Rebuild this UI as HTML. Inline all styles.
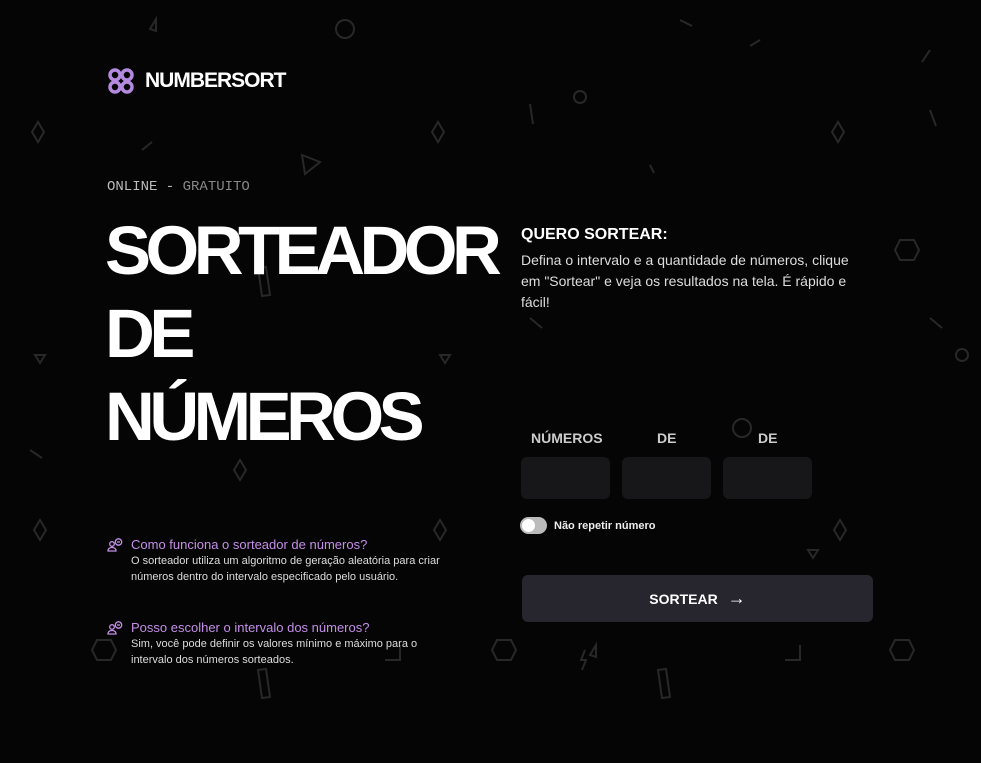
<!DOCTYPE html>
<html><head><meta charset="utf-8"><style>
*{margin:0;padding:0;box-sizing:border-box}
body{width:981px;height:763px;background:#050505;font-family:"Liberation Sans",sans-serif;color:#fff;position:relative;overflow:hidden}
.a{position:absolute}
.bg{position:absolute;left:0;top:0}
.logo{left:107px;top:67px;display:flex;align-items:center;gap:10px;font-weight:bold;font-size:21px;letter-spacing:-1px}
.tag{left:107px;top:179px;font-family:"Liberation Mono",monospace;font-size:14px;color:#bbb}
.tag span{color:#888}
h1{position:absolute;left:105px;top:209px;font-size:69px;line-height:83px;font-weight:900;letter-spacing:-5.5px}
.q{left:107px;width:350px}
.q .t{color:#c48ee8;font-size:13px;position:relative;padding-left:24px}
.q .t svg{position:absolute;left:0;top:1px}
.q .d{color:#ddd;font-size:11px;line-height:16px;padding-left:24px;margin-top:1px}
.rt{left:521px;top:226px;font-weight:bold;font-size:16px}
.rd{left:521px;top:250px;width:345px;font-size:14px;line-height:21px;color:#ddd}
.lbl{top:430px;font-weight:bold;font-size:14px;color:#ccc}
.in{top:457px;width:89px;height:42px;background:#17171a;border-radius:6px}
.btn{left:522px;top:575px;width:351px;height:47px;background:#27262f;border-radius:6px;display:flex;align-items:center;justify-content:center;gap:10px;font-weight:bold;font-size:14px}
</style></head><body>
<svg class="bg" width="981" height="763" fill="none" stroke="#282828" stroke-width="2">
<circle cx="345" cy="29" r="9"/><circle cx="742" cy="428" r="9"/><circle cx="962" cy="355" r="6"/><circle cx="580" cy="97" r="6"/>
<path d="M150 29l6-10v12z M590 655l6-10v12z M142 150l10-8 M302 155l18 7-15 12z M530 104l3 20 M35 355l10 0-5 8z M440 355l10 0-5 8z M808 550l10 0-5 8z M900 240h14l5 10-5 10h-14l-5-10z M97 640h14l5 10-5 10h-14l-5-10z M497 640h14l5 10-5 10h-14l-5-10z M895 640h14l5 10-5 10h-14l-5-10z M38 122l6 10-6 10-6-10z M438 122l6 10-6 10-6-10z M838 122l6 10-6 10-6-10z M240 460l6 10-6 10-6-10z M640 460l6 10-6 10-6-10z M40 520l6 10-6 10-6-10z M440 520l6 10-6 10-6-10z M840 520l6 10-6 10-6-10z M258 268l4 28 8-1-4-28z M258 670l4 28 8-1-4-28z M658 670l4 28 8-1-4-28z M930 318l12 10 M530 318l12 10 M30 450l12 8 M930 50l-8 12 M930 110l6 16 M680 20l12 6 M760 40l-10 6 M800 645v15h-15 M400 645v15h-15 M585 650l-4 10h5l-4 10 M650 165l4 8"/>
</svg>
<div class="a logo"><svg width="28" height="28" viewBox="0 0 28 28" fill="none" stroke="#b48ae0" stroke-width="3.5"><circle cx="8" cy="8" r="5"/><circle cx="20" cy="8" r="5"/><circle cx="8" cy="20" r="5"/><circle cx="20" cy="20" r="5"/></svg>NUMBERSORT</div>
<div class="a tag">ONLINE - <span>GRATUITO</span></div>
<h1>SORTEADOR<br>DE<br>NÚMEROS</h1>
<div class="a q" style="top:537px"><div class="t"><svg width="16" height="14" viewBox="0 0 16 14" fill="none" stroke="#c48ee8" stroke-width="1.3"><circle cx="5" cy="6" r="2.3"/><path d="M1 13c0-2.5 2-3.5 4-3.5s4 1 4 3.5z"/><circle cx="11.5" cy="4" r="3.2"/><path d="M10 4h3"/></svg>Como funciona o sorteador de números?</div><div class="d">O sorteador utiliza um algoritmo de geração aleatória para criar números dentro do intervalo especificado pelo usuário.</div></div>
<div class="a q" style="top:620px"><div class="t"><svg width="16" height="14" viewBox="0 0 16 14" fill="none" stroke="#c48ee8" stroke-width="1.3"><circle cx="5" cy="6" r="2.3"/><path d="M1 13c0-2.5 2-3.5 4-3.5s4 1 4 3.5z"/><circle cx="11.5" cy="4" r="3.2"/><path d="M10 4h3"/></svg>Posso escolher o intervalo dos números?</div><div class="d">Sim, você pode definir os valores mínimo e máximo para o intervalo dos números sorteados.</div></div>
<div class="a rt">QUERO SORTEAR:</div>
<div class="a rd">Defina o intervalo e a quantidade de números, clique em "Sortear" e veja os resultados na tela. É rápido e fácil!</div>
<div class="a lbl" style="left:531px">NÚMEROS</div>
<div class="a lbl" style="left:657px">DE</div>
<div class="a lbl" style="left:758px">DE</div>
<div class="a in" style="left:521px"></div>
<div class="a in" style="left:622px"></div>
<div class="a in" style="left:723px"></div>
<div class="a" style="left:520px;top:517px;width:27px;height:17px;border-radius:9px;background:#bbb"><div style="position:absolute;left:2px;top:2px;width:13px;height:13px;border-radius:50%;background:#fff"></div></div>
<div class="a" style="left:554px;top:520px;font-size:11px;font-weight:bold;color:#eee">Não repetir número</div>
<div class="a btn">SORTEAR <span style="font-weight:normal;font-size:18px">&rarr;</span></div>
</body></html>
